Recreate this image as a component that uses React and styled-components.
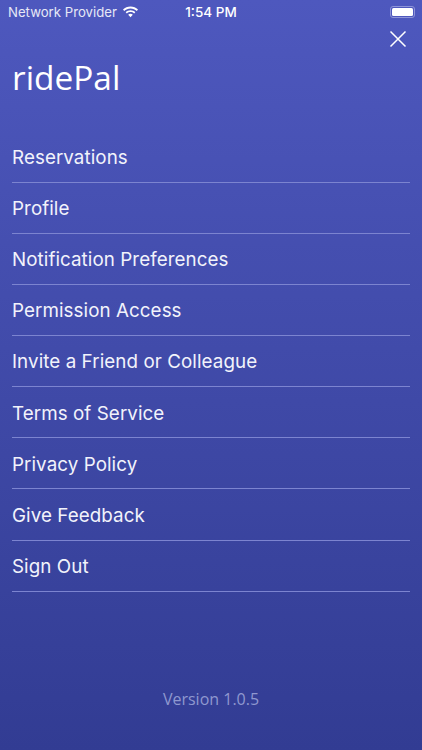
import React from "react";
import styled, { createGlobalStyle } from "styled-components";

const items = [
  "Reservations",
  "Profile",
  "Notification Preferences",
  "Permission Access",
  "Invite a Friend or Colleague",
  "Terms of Service",
  "Privacy Policy",
  "Give Feedback",
  "Sign Out",
];

const App = () => (
  <>
    <Global />
    <Screen>
      <StatusBar>
        <Carrier>
          Network Provider
          <svg width="17" height="12" viewBox="0 0 17 12">
            <path d="M8.5 2.4c2.4 0 4.6.9 6.3 2.5l1.2-1.3C14 1.7 11.4.6 8.5.6S3 1.7 1 3.6l1.2 1.3c1.7-1.6 3.9-2.5 6.3-2.5z" fill="#fff" />
            <path d="M8.5 6.1c1.4 0 2.6.5 3.6 1.4l1.2-1.3c-1.3-1.2-3-1.9-4.8-1.9s-3.5.7-4.8 1.9l1.2 1.3c1-.9 2.2-1.4 3.6-1.4z" fill="#fff" />
            <path d="M8.5 7.8c-.9 0-1.7.3-2.3.9l2.3 2.5 2.3-2.5c-.6-.6-1.4-.9-2.3-.9z" fill="#fff" />
          </svg>
        </Carrier>
        <Clock>1:54 PM</Clock>
        <Battery>
          <BatteryFill />
        </Battery>
      </StatusBar>
      <CloseRow>
        <svg width="18" height="18" viewBox="0 0 18 18">
          <path d="M1.5 1.5l15 15M16.5 1.5l-15 15" stroke="#fff" strokeWidth="1.5" fill="none" />
        </svg>
      </CloseRow>
      <Title>ridePal</Title>
      <Menu>
        {items.map((item) => (
          <MenuItem key={item}>{item}</MenuItem>
        ))}
      </Menu>
      <Version>Version 1.0.5</Version>
    </Screen>
  </>
);

const Global = createGlobalStyle`
  html, body {
    margin: 0;
    padding: 0;
    height: 100%;
  }
  body {
    font-family: "Inter", "Liberation Sans", sans-serif;
    overflow: hidden;
  }
`;

const Screen = styled.div`
  width: 422px;
  height: 750px;
  box-sizing: border-box;
  display: flex;
  flex-direction: column;
  color: #fff;
  background: linear-gradient(180deg, #4e58be 0%, #323c93 100%);
`;

const StatusBar = styled.div`
  height: 24px;
  display: grid;
  grid-template-columns: 1fr auto 1fr;
  align-items: center;
  padding: 0 8px;
`;

const Carrier = styled.div`
  display: flex;
  align-items: center;
  gap: 5px;
  font-size: 13.2px;
  color: #e6e8f6;
`;

const Clock = styled.div`
  font-size: 13.5px;
  font-weight: 500;
`;

const Battery = styled.div`
  justify-self: end;
  width: 25px;
  height: 12px;
  box-sizing: border-box;
  border: 1px solid #8e94d8;
  border-radius: 3px;
  padding: 1px;
  margin-right: -1px;
`;

const BatteryFill = styled.div`
  height: 100%;
  background: #fff;
  border-radius: 1.5px;
`;

const CloseRow = styled.div`
  display: flex;
  justify-content: flex-end;
  padding: 6px 15px 0 0;
  height: 18px;
`;

const Title = styled.h1`
  margin: 7px 0 0;
  padding-left: 12px;
  font-family: "Open Sans", "Liberation Sans", sans-serif;
  font-size: 33.4px;
  font-weight: 400;
  line-height: 44px;
`;

const Menu = styled.div`
  margin: 32.6px 12px 0;
  display: flex;
  flex-direction: column;
`;

const MenuItem = styled.div`
  height: 51.125px;
  box-sizing: border-box;
  padding-top: 13.4px;
  font-size: 18.8px;
  line-height: 26px;
  letter-spacing: 0.07px;
  color: #f2f3fb;
  border-bottom: 1px solid #7c84d0;
`;

const Version = styled.div`
  margin-top: auto;
  padding-bottom: 40px;
  text-align: center;
  font-family: "Open Sans", "Liberation Sans", sans-serif;
  font-size: 16px;
  line-height: 22px;
  color: #8f98cf;
`;

export default App;
